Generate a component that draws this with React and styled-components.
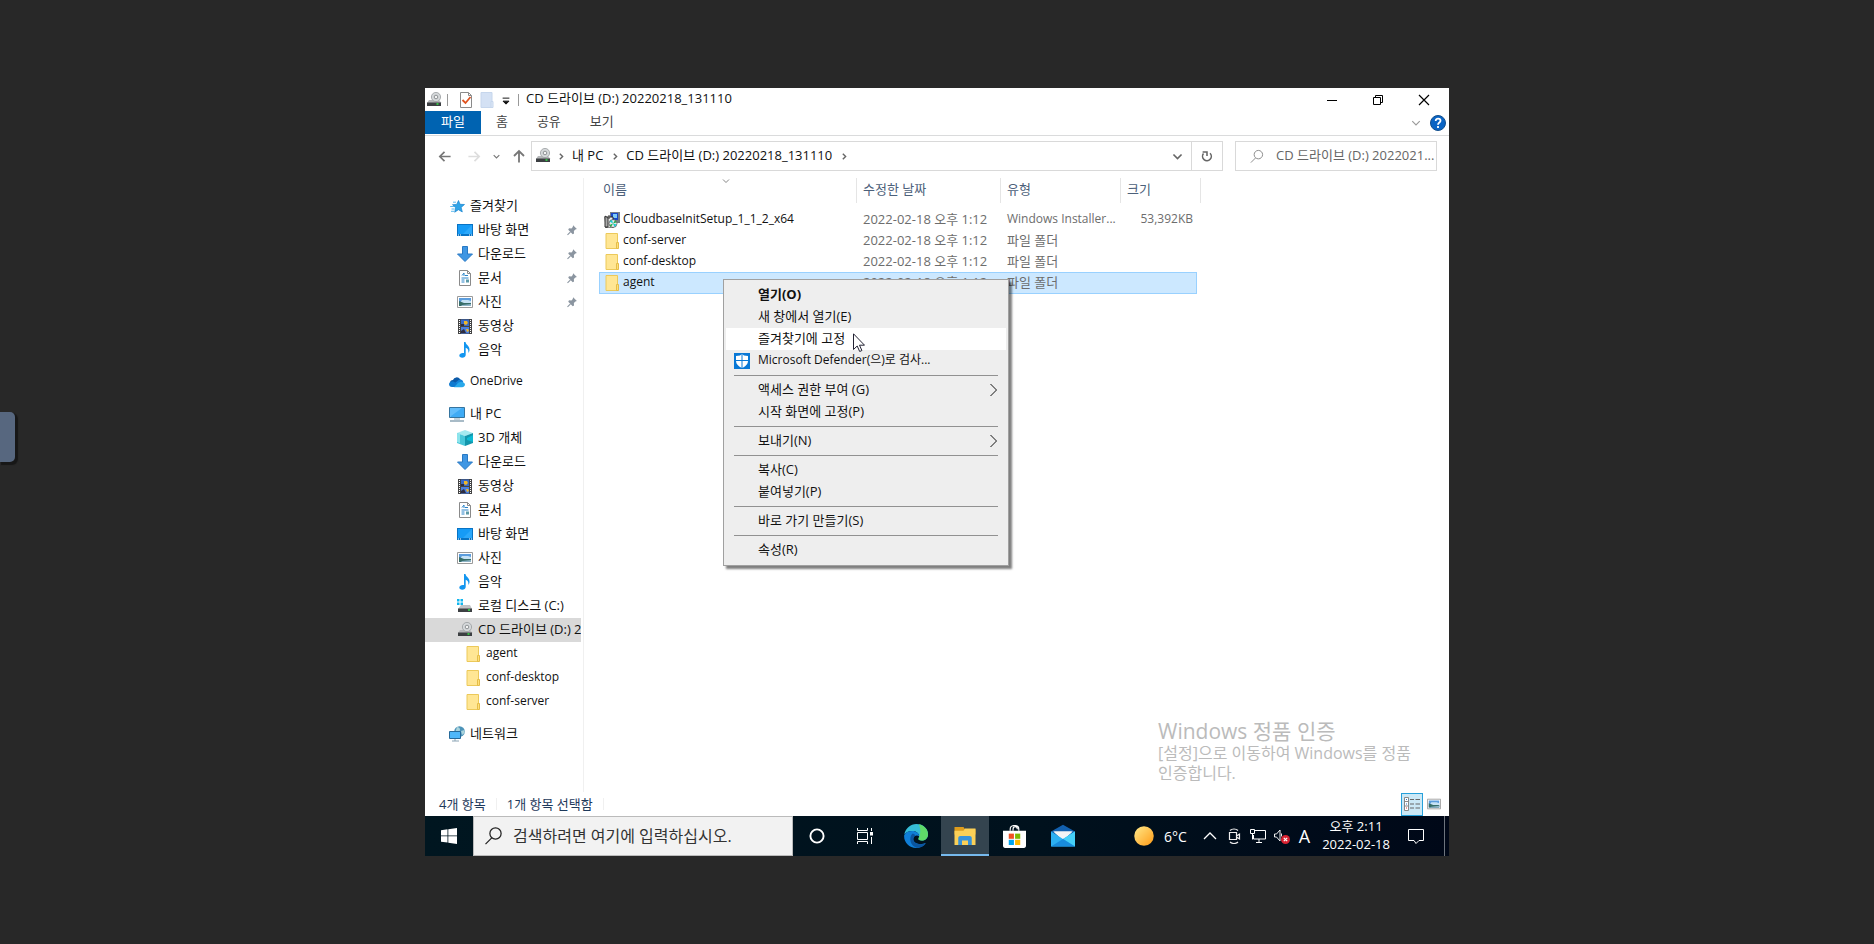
// LIBRARY
import React from "react";

// STYLE
import styled, { createGlobalStyle, css } from "styled-components";

const pinned = [
  { id: "desktop", name: "바탕 화면", icon: "desktop" },
  { id: "download", name: "다운로드", icon: "download" },
  { id: "document", name: "문서", icon: "document" },
  { id: "picture", name: "사진", icon: "picture" },
];

const sideList = [
  { name: "즐겨찾기", icon: "star", level: 0 },
  ...pinned.map((item) => ({ ...item, level: 1, pin: true })),
  { name: "동영상", icon: "video", level: 1 },
  { name: "음악", icon: "music", level: 1 },
  { name: "OneDrive", icon: "cloud", level: 0, gap: true, latin: true },
  { name: "내 PC", icon: "pc", level: 0, gap: true },
  { name: "3D 개체", icon: "cube", level: 1 },
  { name: "다운로드", icon: "download", level: 1 },
  { name: "동영상", icon: "video", level: 1 },
  { name: "문서", icon: "document", level: 1 },
  { name: "바탕 화면", icon: "desktop", level: 1 },
  { name: "사진", icon: "picture", level: 1 },
  { name: "음악", icon: "music", level: 1 },
  { name: "로컬 디스크 (C:)", icon: "disk", level: 1 },
  { name: "CD 드라이브 (D:) 20220218_131110", icon: "drive", level: 1, active: true },
  { name: "agent", icon: "folder", level: 2, latin: true },
  { name: "conf-desktop", icon: "folder", level: 2, latin: true },
  { name: "conf-server", icon: "folder", level: 2, latin: true },
  { name: "네트워크", icon: "network", level: 0, gap: true },
];

const fileList = [
  { name: "CloudbaseInitSetup_1_1_2_x64", icon: "installer", type: "Windows Installer...", size: "53,392KB", latin: true },
  { name: "conf-server", icon: "folder", type: "파일 폴더" },
  { name: "conf-desktop", icon: "folder", type: "파일 폴더" },
  { name: "agent", icon: "folder", type: "파일 폴더", selected: true },
];

const menuList = [
  [
    { name: "열기(O)", bold: true },
    { name: "새 창에서 열기(E)" },
    { name: "즐겨찾기에 고정", hover: true },
    { name: "Microsoft Defender(으)로 검사...", icon: "defender", latin: true },
  ],
  [{ name: "액세스 권한 부여 (G)", arrow: true }, { name: "시작 화면에 고정(P)" }],
  [{ name: "보내기(N)", arrow: true }],
  [{ name: "복사(C)" }, { name: "붙여넣기(P)" }],
  [{ name: "바로 가기 만들기(S)" }],
  [{ name: "속성(R)" }],
];

// ICONS (16 x 16 grid)
const icons = {
  star: (
    <>
      <path d="M9.500 2.500l1.500 3.800 4.500.2-3.400 2.900 1.200 4.500-3.900-2.200-3.700 2.500.9-4.500-3.100-3 4.200-.3z" fill="#2fa4e8" stroke="#1583cf" strokeWidth=".7" />
      <path d="M4 4.200h3M1.200 8.500h4M2.500 11h3M2 13.300h3" stroke="#59b9ee" />
    </>
  ),
  desktop: (
    <>
      <path d="M0 2h16v12H0z" fill="#0873c4" />
      <path d="M1 3h14v9H1z" fill="#169bf6" />
      <path d="M6 12L15 3v9z" fill="#2ba8fb" />
      <path d="M1 13h1M3 13h1M12 13h1M14 13h1" stroke="#fff" />
    </>
  ),
  download: <path d="M5.500.500h5V8h5L8 15.500.500 8h5z" fill="#3f96e3" stroke="#2879c4" />,
  document: (
    <>
      <path d="M2.500.500h8l3 3v12h-11z" fill="#fff" stroke="#8a8a8a" />
      <path d="M10.500.500v3h3" fill="none" stroke="#8a8a8a" />
      <path d="M5 5.500L7 3v3M8 5.500h3M4.500 8h7M4.500 10h3M4.500 12h3" fill="none" stroke="#2b84c9" />
      <path d="M9 9.500h3v3H9z" fill="#5c9aa8" />
    </>
  ),
  picture: (
    <>
      <path d="M.5 2.500h15v11H.5z" fill="#fff" stroke="#9a9a9a" />
      <path d="M2 4h12v8H2z" fill="#5c9ddd" />
      <path d="M5 6h6l3 1v2H3z" fill="#c6e2f5" />
      <path d="M2 7l5 2 7 0v3H2z" fill="#376d68" />
      <path d="M5 11l9-1v2H4z" fill="#8eb4c7" />
    </>
  ),
  video: (
    <>
      <path d="M1 1h14v15H1z" fill="#444" />
      <path d="M4 1.500h8V8H4z" fill="#3769c8" />
      <path d="M4 9h8v6.500H4z" fill="#4a7fe0" />
      <path d="M7 3h3l1 2-2 2-2-1zM9 11h2l1 2-2 1z" fill="#efb72c" />
      <path d="M4 6h3v2H4zM4 13l3-2 2 4H4z" fill="#2d2d43" />
      <path d="M2.500 2v13M13.500 2v13" stroke="#fff" strokeDasharray="1 1" />
    </>
  ),
  music: (
    <path
      d="M7 0h1.500c.3 3.200 4.500 3.500 4 8.500-.1 1-.6 1.800-1.200 2.500.5-3-.5-4.500-2.600-5.200V13c0 1.600-1.600 2.800-3.500 2.800-1.700 0-2.900-.9-2.900-2.200 0-1.600 1.700-2.700 3.400-2.700.5 0 .9.1 1.300.2z"
      fill="#1296f0"
    />
  ),
  cloud: (
    <>
      <path d="M4 6a4 4 0 0 1 7-1l3 4-9 3-4-3c0-2 1-3 3-3z" fill="#0c5aa8" />
      <path d="M9 6.500c2-2 5-.7 5.200 1.600L11 12 6 9z" fill="#1583d8" />
      <path d="M3 13c-3.500 0-4-4.500-1-5.300C4 7 5 7.500 7 9l4 4z" fill="#0f7ad0" />
      <path d="M5 13.300L9 9c2-1.600 3.500-1 5-.8 3 .8 2.500 5-1 5.100z" fill="#28a8ea" />
    </>
  ),
  pc: (
    <>
      <path d="M.5 1.500h15v10H.5z" fill="#62bdfb" stroke="#35749f" />
      <path d="M2 10L13 2h2v9H2z" fill="#3fabf5" />
      <path d="M5 13h6" stroke="#88a8bd" />
      <path d="M1 15h14" stroke="#8ba4b5" strokeWidth="1.500" />
    </>
  ),
  cube: (
    <>
      <path d="M0 3l8-3 8 3-8 3z" fill="#a5eaf0" />
      <path d="M0 3l8 3v10l-8-3z" fill="#48c6d8" />
      <path d="M8 6l8-3v10l-8 3z" fill="#1296ac" />
      <path d="M10 8l6-3v7l-6-2z" fill="#0dbad3" />
      <path d="M0 3l3 1v9l-3-1z" fill="#8ce4ec" />
    </>
  ),
  disk: (
    <>
      <path d="M0 1h2.500v2.500H0zM3.500 1H6v2.500H3.500zM0 4.500h2.500V7H0zM3.500 4.500H6V7H3.500z" fill="#10b6ee" />
      <path d="M4 7h9l2 4H1z" fill="#bfc1c4" />
      <path d="M1 10.500h14V14H1z" fill="#3c3f42" />
      <path d="M11 12h2" stroke="#35e848" strokeWidth="1.500" />
    </>
  ),
  drive: (
    <>
      <path d="M3 8h10l2.500 3H1z" fill="#b5b7b9" />
      <circle cx="10" cy="5" r="4.600" fill="#d5d8da" stroke="#999da0" strokeWidth=".8" />
      <circle cx="10" cy="5" r="1.800" fill="#f4f4f4" stroke="#85898c" strokeWidth=".9" />
      <path d="M1 10.500h14V14H1z" fill="#3c3f42" />
      <path d="M10.500 12h2" stroke="#35e848" strokeWidth="1.500" />
    </>
  ),
  folder: (
    <>
      <path d="M2 .5h11.500v15H2z" fill="#ffe694" stroke="#ecc95a" />
      <path d="M12.500 9.500h2v6h-2z" fill="#ffe07a" stroke="#e5bd49" />
    </>
  ),
  network: (
    <>
      <circle cx="10.500" cy="5.500" r="5.300" fill="#4c93b8" />
      <path d="M8 1c3 0 4 3 2 5l-4 1zM12 5l3.500-1v3L13 9z" fill="#a9d3dc" />
      <path d="M.5 5.500h11v7H.5z" fill="#4fb8fa" stroke="#266a9a" />
      <path d="M3 15h7M6 13v2" stroke="#8ba4b5" />
    </>
  ),
  installer: (
    <>
      <path d="M6 0h10v11H6z" fill="#777e86" />
      <path d="M7 1h7v7H7z" fill="#1746c8" />
      <path d="M9 2h4v4H9z" fill="#7ccaf8" />
      <path d="M1 5h8v11H2z" fill="#efefef" stroke="#222" />
      <path d="M1 4l3 2v9H1zM5 3v4" fill="#aaa" stroke="#333" />
      <circle cx="9" cy="11.500" r="4" fill="#e8e8e8" stroke="#333" strokeWidth=".6" />
      <path d="M9 11.500L5.500 9.500 8 7.800zM9 11.500l3.700 1L10.500 15z" fill="#17cbd2" />
      <path d="M9 11.500l2-3.300 1.800 2zM9 11.500l-2 3.400-1.500-2z" fill="#24ab43" />
    </>
  ),
  defender: (
    <>
      <path d="M0 0h16v16H0z" fill="#0878d6" />
      <path d="M8 1l2 1.500 4 .5v5c0 3-2.500 5.500-6 7-3.500-1.500-6-4-6-7V3l4-.5z" fill="#fff" />
      <path d="M8 1v14M2 7.500h12" stroke="#0878d6" />
    </>
  ),
  check: (
    <>
      <path d="M2.500.500h8l3 3v12h-11z" fill="#fff" stroke="#8a8a8a" />
      <path d="M10.500.500v3h3" fill="none" stroke="#8a8a8a" />
      <path d="M4.500 8l3 3 5-6" fill="none" stroke="#e0531f" strokeWidth="1.800" />
    </>
  ),
  blueFolder: (
    <>
      <path d="M2 .5h11v15H2z" fill="#d4e1f4" stroke="#c6d6ec" />
      <path d="M12 9.500h2v6h-2z" fill="#dfe9f7" stroke="#c6d6ec" />
    </>
  ),
  pin: (
    <>
      <path d="M9.500 1.500l5 5-2 .7-2 2 .2 3.300-1.700 1L3 7.500l1-1.700 3.300.2 1.700-2z" fill="#8b95a0" />
      <path d="M6 10.500L2 14.500" stroke="#8b95a0" strokeWidth="1.400" />
    </>
  ),
  back: <path d="M14.500 8H3M8 3L3 8l5 5" fill="none" stroke="currentColor" strokeWidth="1.800" />,
  forward: <path d="M1.500 8H13M8 3l5 5-5 5" fill="none" stroke="currentColor" strokeWidth="1.800" />,
  up: <path d="M8 14.500V3M3 8l5-5 5 5" fill="none" stroke="currentColor" strokeWidth="1.800" />,
  down: <path d="M3 5.500l5 5 5-5" fill="none" stroke="currentColor" strokeWidth="2" />,
  thinDown: <path d="M2 5l6 6 6-6" fill="none" stroke="currentColor" strokeWidth="1.800" />,
  right: <path d="M5 3l5 5-5 5" fill="none" stroke="currentColor" strokeWidth="2.500" />,
  submenu: <path d="M4.500 2L10.500 8l-6 6" fill="none" stroke="currentColor" />,
  refresh: (
    <>
      <path d="M4 5.200A5 5 0 1 0 11.500 4.800" fill="none" stroke="currentColor" strokeWidth="1.800" />
      <path d="M3 3.500h5V8" fill="none" stroke="currentColor" strokeWidth="1.800" />
    </>
  ),
  search: (
    <>
      <circle cx="10" cy="6" r="4.500" fill="none" stroke="currentColor" />
      <path d="M7 9.500L2 14.500" stroke="currentColor" />
    </>
  ),
  quick: <path d="M3.500 5.500h9M4 9.500h8l-4 4z" fill="#111" stroke="#111" strokeWidth="1.300" />,
  min: <path d="M3 8.500h10" stroke="#000" />,
  restore: <path d="M3.500 5.500h7v7h-7zM5.500 5.500v-2h7v7h-2" fill="none" stroke="#000" />,
  close: <path d="M3 3l10 10M13 3L3 13" stroke="#000" strokeWidth="1.200" />,
  help: (
    <>
      <circle cx="8" cy="8" r="7.500" fill="#0a64c4" stroke="#124e8c" />
      <path d="M5.700 6c0-3.300 4.800-3 4.800-.2C10.500 7.500 8 7.500 8 9.700M8 11v2" fill="none" stroke="#fff" strokeWidth="1.800" />
    </>
  ),
  details: (
    <>
      <path d="M.5 1.500h4v13h-4zM.5 5.500h4M.5 10h4" fill="#fff" stroke="#888" />
      <path d="M2 3.500h1M2 8h1" stroke="#357ac4" />
      <path d="M2 12h1" stroke="#d33" />
      <path d="M6 3.500h4M11.500 3.500H16M6 8h4M11.500 8H16M6 12h4M11.500 12H16" stroke="#666" />
    </>
  ),
  start: <path d="M0 2.200l6.500-.9v6.200H0zM7.300 1.200L16 0v7.500H7.300zM0 8.300h6.500v6.200L0 13.700zM7.300 8.300H16V16l-8.700-1.300z" fill="#fff" />,
  cortana: <circle cx="8" cy="8" r="6.600" fill="none" stroke="#fff" strokeWidth="1.900" />,
  taskView: (
    <>
      <path d="M.5 0v2.500h10V0M.5 16v-2.500h10V16M.5 4.500h10v7H.5zM14.500 0v3M14.500 9v7" fill="none" stroke="#fff" />
      <path d="M13 4h3v3.500h-3z" fill="#fff" />
    </>
  ),
  edge: (
    <>
      <path d="M.2 7C1 2.800 4.300 0 8.200 0 13 0 16 3.300 16 6.800c0 2.700-2 4.200-4.200 4.200-1.800 0-2.600-.7-2-1.700C11 7 8.500 4.600 5.500 4.600 3 4.600 1 5.600.2 7z" fill="#35bdd8" />
      <path d="M10 .2c3.600.8 6 3.500 6 6.600 0 2.700-2 4.200-4.200 4.200-1.800 0-2.600-.7-2-1.700 1.700-3.400 1-6.400.2-9.100z" fill="#5fdb68" />
      <path d="M.1 7.500C.8 5.600 3 4.600 5.500 4.600c2.600 0 4.700 1.700 4.600 3.600-1.200-1-3.600-.6-3.900 1.600-.4 3 4 4.700 8.300 2.900C13 15 10.500 16 8 16 3.400 16-.3 12.200.1 7.500z" fill="#0f7fd8" />
      <path d="M5.500 6.500c-2.600 3-1.200 8 3 9.400 2.500.1 4.700-1.100 6.100-3.100-4.200 1.600-8.600 0-8.400-3 .1-1.200.7-1.900 1.500-2.200-.6-.8-1.300-1.200-2.200-1.100z" fill="#0b559f" />
    </>
  ),
  explorer: (
    <>
      <path d="M1 2h6l1 1.500h7V7H1z" fill="#dd9c1d" />
      <path d="M1 4.500h6L8 3h7v11H1z" fill="#fbd057" />
      <path d="M3.500 14V9.500c0-1 .5-1.500 1.500-1.500h6c1 0 1.500.5 1.500 1.500V14H10v-3H6v3z" fill="#3793db" />
    </>
  ),
  store: (
    <>
      <path d="M5 4V3c0-3.500 6-3.500 6 0v1M7 4V3c0-2.500 3-2.500 3 0" fill="none" stroke="#fff" strokeWidth=".8" />
      <path d="M0 4h16v10.500c0 .8-.5 1.500-1.500 1.500h-13C.5 16 0 15.300 0 14.500z" fill="#fff" />
      <path d="M4 6h3.600v3.600H4z" fill="#f25022" />
      <path d="M8.400 6H12v3.600H8.400z" fill="#7fba00" />
      <path d="M4 10.300h3.600v3.600H4z" fill="#00a4ef" />
      <path d="M8.400 10.300H12v3.600H8.400z" fill="#ffb900" />
    </>
  ),
  mail: (
    <>
      <path d="M0 5l8-4.500L16 5v4H0z" fill="#1260ae" />
      <path d="M1.500 5h13L8 11z" fill="#f3f5f6" />
      <path d="M0 5l8 5 8-5v10H0z" fill="#2cb0f2" />
      <path d="M2 5h12L8 9.500z" fill="#f3f5f6" />
      <path d="M16 5L8 10l8 5z" fill="#45d0f8" />
      <path d="M0 15L8 10l8 5z" fill="#188bdc" />
    </>
  ),
  sun: (
    <>
      <defs>
        <linearGradient id="sun" x1="0" y1="0" x2="1" y2="1">
          <stop offset="0" stopColor="#ffe98a" />
          <stop offset="1" stopColor="#ff9b16" />
        </linearGradient>
      </defs>
      <circle cx="8" cy="8" r="7.800" fill="url(#sun)" />
    </>
  ),
  trayUp: <path d="M2 11l6-6 6 6" fill="none" stroke="#fff" strokeWidth="1.300" />,
  camera: <path d="M3.500 4.500h7v7h-7zM10.500 8l3-2v5l-3-2M4 2.500C6 .5 10 .5 12 2.500M4 14c2 2 6 2 8 0" fill="none" stroke="#eee" strokeWidth="1.200" />,
  lan: <path d="M5 2.500h10.500v8.500H3.500V7M9 11v3.500M6 14.500h6M.5 1.500h4v4h-4zM2.500 5.500v6" fill="none" stroke="#fff" />,
  sound: (
    <>
      <path d="M.5 6h2l3.500-4v11l-3.500-4h-2zM7.500 5.500v3" fill="none" stroke="#eee" />
      <circle cx="11.500" cy="11.500" r="4.500" fill="#d92231" />
      <path d="M9.800 9.800l3.400 3.400M13.200 9.800l-3.400 3.400" stroke="#fff" strokeWidth="1.200" />
    </>
  ),
  notice: <path d="M.5 1.500h15v11H11L8 15.500l-2-3H.5z" fill="none" stroke="#fff" />,
};

const Icon = ({ name, size = 16 }) => (
  <Svg viewBox="0 0 16 16" $size={size} aria-hidden="true">
    {icons[name]}
  </Svg>
);

const TitleBar = () => (
  <TitleWrap>
    <Icon name="drive" />
    <Bar $left={5} $right={10} />
    <Icon name="check" />
    <QuickGap />
    <Icon name="blueFolder" />
    <QuickGap />
    <Icon name="quick" size={12} />
    <Bar $left={6} $right={7} />
    <WindowTitle>CD 드라이브 (D:) 20220218_131110</WindowTitle>
    <WindowButton aria-label="최소화"><Icon name="min" /></WindowButton>
    <WindowButton aria-label="이전 크기로"><Icon name="restore" /></WindowButton>
    <WindowButton aria-label="닫기"><Icon name="close" /></WindowButton>
  </TitleWrap>
);

const Ribbon = () => (
  <RibbonWrap>
    <Tab $active>파일</Tab>
    <Tab>홈</Tab>
    <Tab>공유</Tab>
    <Tab>보기</Tab>
    <RibbonRight>
      <PlainButton $color="#999" aria-label="리본 확장"><Icon name="thinDown" size={10} /></PlainButton>
      <PlainButton aria-label="도움말"><Icon name="help" /></PlainButton>
    </RibbonRight>
  </RibbonWrap>
);

const AddressBar = () => (
  <AddressWrap>
    <NavButtons>
      <PlainButton $color="#777" aria-label="뒤로"><Icon name="back" size={15} /></PlainButton>
      <PlainButton $color="#ddd" aria-label="앞으로"><Icon name="forward" size={15} /></PlainButton>
      <PlainButton $color="#777" aria-label="최근 위치"><Icon name="down" size={9} /></PlainButton>
      <PlainButton $color="#777" aria-label="위로"><Icon name="up" size={16} /></PlainButton>
    </NavButtons>
    <AddressBox>
      <Icon name="drive" />
      <Crumb><Icon name="right" size={9} /></Crumb>
      <CrumbButton>내 PC</CrumbButton>
      <Crumb><Icon name="right" size={9} /></Crumb>
      <CrumbButton>CD 드라이브 (D:) 20220218_131110</CrumbButton>
      <Crumb><Icon name="right" size={9} /></Crumb>
      <AddressEnd>
        <BoxButton $width={28} aria-label="이전 위치"><Icon name="down" size={13} /></BoxButton>
        <BoxButton $width={31} $line aria-label="새로 고침"><Icon name="refresh" size={14} /></BoxButton>
      </AddressEnd>
    </AddressBox>
    <SearchBox>
      <Icon name="search" size={15} />
      <SearchInput aria-label="검색" placeholder="CD 드라이브 (D:) 2022021..." />
    </SearchBox>
  </AddressWrap>
);

const Sidebar = () => (
  <SideWrap>
    {sideList.map((item, idx) => (
      <SideItem key={idx} $level={item.level} $gap={item.gap} $active={item.active} $latin={item.latin}>
        <Icon name={item.icon} />
        <SideName>{item.name}</SideName>
        {item.pin && <Icon name="pin" size={12} />}
      </SideItem>
    ))}
  </SideWrap>
);

const FileTable = () => (
  <Table>
    <thead>
      <HeadRow>
        <HeadCell>
          이름
          <SortMark><Icon name="thinDown" size={8} /></SortMark>
        </HeadCell>
        <HeadCell>수정한 날짜</HeadCell>
        <HeadCell>유형</HeadCell>
        <HeadCell>크기</HeadCell>
      </HeadRow>
    </thead>
    <TableBody>
      {fileList.map((file) => (
        <FileRow key={file.name} $selected={file.selected}>
          <NameCell $latin>
            <Icon name={file.icon} />
            <span>{file.name}</span>
          </NameCell>
          <FileCell>2022-02-18 오후 1:12</FileCell>
          <FileCell $latin={file.latin}>{file.type}</FileCell>
          <FileCell $latin $right>{file.size}</FileCell>
        </FileRow>
      ))}
    </TableBody>
  </Table>
);

const ContextMenu = () => (
  <MenuWrap role="menu">
    {menuList.map((group, idx) => (
      <MenuGroup key={idx}>
        {group.map((item) => (
          <MenuItem key={item.name} role="menuitem" $hover={item.hover} $bold={item.bold} $latin={item.latin}>
            <MenuIcon>{item.icon && <Icon name={item.icon} />}</MenuIcon>
            <MenuName>{item.name}</MenuName>
            {item.arrow && <Icon name="submenu" />}
          </MenuItem>
        ))}
      </MenuGroup>
    ))}
  </MenuWrap>
);

const Taskbar = () => (
  <TaskWrap>
    <TaskButton aria-label="시작"><Icon name="start" /></TaskButton>
    <TaskSearch>
      <Icon name="search" size={20} />
      <TaskInput aria-label="작업 표시줄 검색" placeholder="검색하려면 여기에 입력하십시오." />
    </TaskSearch>
    <TaskButton aria-label="Cortana"><Icon name="cortana" /></TaskButton>
    <TaskButton aria-label="작업 보기"><Icon name="taskView" /></TaskButton>
    <TaskApps>
      <TaskButton aria-label="Edge"><Icon name="edge" size={24} /></TaskButton>
      <TaskButton $active aria-label="파일 탐색기"><Icon name="explorer" size={24} /></TaskButton>
      <TaskButton aria-label="Store"><Icon name="store" size={23} /></TaskButton>
      <TaskButton aria-label="메일"><Icon name="mail" size={24} /></TaskButton>
    </TaskApps>
    <Tray>
      <Weather>
        <Icon name="sun" size={20} />
        6°C
      </Weather>
      <TrayIcons>
        <Icon name="trayUp" />
        <Icon name="camera" />
        <Icon name="lan" />
        <Icon name="sound" />
      </TrayIcons>
      <InputMode>A</InputMode>
      <Clock>
        <span>오후 2:11</span>
        <span>2022-02-18</span>
      </Clock>
      <NoticeButton aria-label="알림"><Icon name="notice" /></NoticeButton>
    </Tray>
  </TaskWrap>
);

const App = () => {
  return (
    <Stage>
      <GlobalStyle />
      <PanelHandle aria-label="제어판 열기" />
      <Screen>
        <Explorer>
          <TitleBar />
          <Ribbon />
          <AddressBar />
          <Content>
            <Sidebar />
            <FileTable />
          </Content>
          <StatusBar>
            <StatusText>4개 항목</StatusText>
            <StatusText>1개 항목 선택함</StatusText>
            <ViewButtons>
              <ViewButton $active aria-label="자세히"><Icon name="details" /></ViewButton>
              <ViewButton aria-label="큰 아이콘"><Icon name="picture" size={14} /></ViewButton>
            </ViewButtons>
          </StatusBar>
        </Explorer>
        <Taskbar />
        <Watermark>
          <h2>Windows 정품 인증</h2>
          <p>[설정]으로 이동하여 Windows를 정품 인증합니다.</p>
        </Watermark>
        <ContextMenu />
        <Pointer viewBox="0 0 12 19" aria-hidden="true">
          <path d="M.5.8v15.700l3.700-3.500 2.500 5.500 2.200-1-2.400-5.300h5z" fill="#fff" stroke="#223" />
        </Pointer>
      </Screen>
    </Stage>
  );
};

const GlobalStyle = createGlobalStyle`
  * {
    box-sizing: border-box;
  }
  body {
    margin: 0;
    background: #282828;
    font-family: "Open Sans", "Noto Sans CJK KR", sans-serif;
    font-size: 13px;
    color: #111;
  }
  button, input {
    font: inherit;
    color: inherit;
    border: 0;
    padding: 0;
    background: none;
  }
`;

const Svg = styled.svg`
  display: block;
  flex: none;
  width: ${(props) => props.$size}px;
  height: ${(props) => props.$size}px;
`;

const Stage = styled.div`
  min-height: 100vh;
  padding: 88px 24px;
  display: flex;
  justify-content: center;
`;
const PanelHandle = styled.button`
  position: fixed;
  left: 0;
  top: 412px;
  width: 15px;
  height: 50px;
  border-radius: 0 5px 5px 0;
  background: #57677f;
  box-shadow: 2px 2px 1px 1px #171717;
`;
const Screen = styled.main`
  position: relative;
  flex: 1;
  max-width: 1024px;
  display: flex;
  flex-direction: column;
  background: #fff;
`;
const Explorer = styled.section`
  flex: 1;
  display: flex;
  flex-direction: column;
`;

const TitleWrap = styled.header`
  height: 23px;
  padding: 0 2px 0 1px;
  display: flex;
  align-items: center;
`;
const Bar = styled.span`
  width: 1px;
  height: 12px;
  background: #999;
  margin: 0 ${(props) => props.$right}px 0 ${(props) => props.$left}px;
`;
const QuickGap = styled.span`
  width: 5px;
`;
const WindowTitle = styled.h1`
  flex: 1;
  margin: 0;
  padding-bottom: 3px;
  font-size: 13px;
  font-weight: 400;
  line-height: 18px;
`;
const WindowButton = styled.button`
  width: 46px;
  height: 20px;
  display: flex;
  align-items: center;
  justify-content: center;
`;

const RibbonWrap = styled.nav`
  height: 25px;
  padding-bottom: 1px;
  display: flex;
  gap: 1px;
  border-bottom: 1px solid #dadbdc;
`;
const Tab = styled.button`
  padding: 0 ${(props) => (props.$active ? 16 : 14)}px 3px;
  line-height: 20px;
  color: ${(props) => (props.$active ? "#fff" : "#444")};
  background: ${(props) => (props.$active ? "#0063b1" : "transparent")};
`;
const RibbonRight = styled.div`
  margin-left: auto;
  padding-right: 3px;
  display: flex;
  align-items: center;
  gap: 9px;
`;
const PlainButton = styled.button`
  color: ${(props) => props.$color || "inherit"};
`;

const AddressWrap = styled.div`
  padding: 5px 12px 0 0;
  display: flex;
`;
const NavButtons = styled.div`
  width: 106px;
  padding-left: 12px;
  display: flex;
  align-items: center;
  gap: 10px;
  ${PlainButton}:first-child {
    margin-right: 5px;
  }
`;
const AddressBox = styled.div`
  flex: 1;
  height: 30px;
  padding-left: 3px;
  display: flex;
  align-items: center;
  border: 1px solid #d9d9d9;
`;
const Crumb = styled.span`
  padding: 0 4px 0 6px;
  color: #666;
`;
const CrumbButton = styled.button`
  padding: 0 2px 3px;
  line-height: 20px;
`;
const AddressEnd = styled.div`
  margin-left: auto;
  align-self: stretch;
  display: flex;
  color: #666;
`;
const BoxButton = styled.button`
  width: ${(props) => props.$width}px;
  display: flex;
  align-items: center;
  justify-content: center;
  border-left: ${(props) => (props.$line ? "1px solid #d9d9d9" : 0)};
`;
const SearchBox = styled.label`
  width: 202px;
  margin-left: 12px;
  padding-left: 13px;
  display: flex;
  align-items: center;
  gap: 12px;
  border: 1px solid #d9d9d9;
  color: #888;
`;
const SearchInput = styled.input`
  flex: 1;
  min-width: 0;
  padding-bottom: 2px;
  outline: 0;
  &::placeholder {
    color: #666;
  }
`;

const Content = styled.div`
  flex: 1;
  margin-top: 7px;
  display: flex;
  align-items: stretch;
`;
const SideWrap = styled.nav`
  width: 159px;
  flex: none;
  padding: 16px 2px 0 0;
  border-right: 1px solid #f0f0f0;
`;
const SideItem = styled.button`
  width: 100%;
  height: 24px;
  margin-top: ${(props) => (props.$gap ? 8 : 0)}px;
  padding: 0 ${(props) => (props.$active ? 0 : 3)}px 0 ${(props) => 24 + props.$level * 8}px;
  display: flex;
  align-items: center;
  gap: 5px;
  font-size: ${(props) => (props.$latin ? 12 : 13)}px;
  text-align: left;
  background: ${(props) => (props.$active ? "#d9d9d9" : "transparent")};
`;
const SideName = styled.span`
  flex: 1;
  padding-bottom: 3px;
  line-height: 20px;
  overflow: hidden;
  white-space: nowrap;
`;

const Table = styled.table`
  margin-left: 15px;
  display: block;
  border-collapse: collapse;
  thead {
    display: block;
  }
`;
const rowGrid = css`
  display: grid;
  grid-template-columns: 258px 144px 120px 80px;
`;
const HeadRow = styled.tr`
  ${rowGrid}
`;
const HeadCell = styled.th`
  position: relative;
  height: 25px;
  padding: 0 6px 3px;
  line-height: 22px;
  font-weight: 400;
  text-align: left;
  color: #4c607a;
  border-right: 1px solid #e5e5e5;
  &:first-child {
    padding-left: 4px;
  }
`;
const SortMark = styled.span`
  position: absolute;
  top: -1px;
  left: 48%;
  color: #777;
`;
const TableBody = styled.tbody`
  display: block;
  padding: 6px 4px 0 0;
`;
const FileRow = styled.tr`
  ${rowGrid}
  grid-template-columns: 257px 144px 120px 1fr;
  height: 22px;
  margin-bottom: -1px;
  border: 1px solid ${(props) => (props.$selected ? "#99d1ff" : "transparent")};
  background: ${(props) => (props.$selected ? "#cce8ff" : "transparent")};
`;
const FileCell = styled.td`
  height: 20px;
  padding: 0 ${(props) => (props.$right ? 3 : 6)}px;
  font-size: ${(props) => (props.$latin ? 12 : 13)}px;
  line-height: 18px;
  white-space: nowrap;
  color: #6d6d6d;
  text-align: ${(props) => (props.$right ? "right" : "left")};
`;
const NameCell = styled(FileCell)`
  padding-left: 4px;
  display: flex;
  align-items: center;
  gap: 3px;
  color: #111;
  span {
    padding-bottom: 2px;
  }
`;

const StatusBar = styled.footer`
  height: 24px;
  padding: 0 7px 0 14px;
  display: flex;
  align-items: center;
`;
const StatusText = styled.span`
  padding-right: 10px;
  margin-right: 10px;
  line-height: 12px;
  color: #1e395b;
  border-right: 1px solid #f0f0f0;
`;
const ViewButtons = styled.div`
  margin-left: auto;
  display: flex;
  gap: 3px;
`;
const ViewButton = styled.button`
  height: 23px;
  padding: 0 ${(props) => (props.$active ? 2 : 1)}px;
  border: ${(props) => (props.$active ? "1px solid #26a0da" : 0)};
  background: ${(props) => (props.$active ? "#cbe8f6" : "transparent")};
`;

const Watermark = styled.aside`
  position: absolute;
  right: 28px;
  bottom: 73px;
  width: 263px;
  color: #bbb;
  word-break: keep-all;
  h2 {
    margin: 0;
    font-size: 21px;
    font-weight: 400;
    line-height: 24px;
  }
  p {
    margin: 0;
    font-size: 16px;
    line-height: 20px;
  }
`;

const MenuWrap = styled.div`
  position: absolute;
  left: 298px;
  top: 191px;
  width: 286px;
  padding: 4px 2px;
  border: 1px solid #a0a0a0;
  background: #eee;
  box-shadow: 3px 3px 2px rgba(0, 0, 0, 0.5);
`;
const MenuGroup = styled.div`
  & + &::before {
    content: "";
    display: block;
    height: 1px;
    margin: 3px 8px;
    background: #919191;
  }
`;
const MenuItem = styled.button`
  width: 100%;
  height: 22px;
  padding: 0 4px 0 8px;
  display: flex;
  align-items: center;
  font-size: ${(props) => (props.$latin ? 12 : 13)}px;
  font-weight: ${(props) => (props.$bold ? 700 : 400)};
  background: ${(props) => (props.$hover ? "#fff" : "transparent")};
`;
const MenuIcon = styled.span`
  width: 24px;
`;
const MenuName = styled.span`
  flex: 1;
  padding-bottom: 3px;
  line-height: 18px;
  text-align: left;
`;
const Pointer = styled.svg`
  position: absolute;
  left: 428px;
  top: 245px;
  width: 12px;
  height: 19px;
`;

const TaskWrap = styled.footer`
  height: 40px;
  display: flex;
  background: linear-gradient(90deg, #001620, #00111d 60%, #000818);
  color: #fff;
`;
const TaskButton = styled.button`
  width: 48px;
  display: flex;
  align-items: center;
  justify-content: center;
  background: ${(props) => (props.$active ? "#34444f" : "transparent")};
  box-shadow: ${(props) => (props.$active ? "inset 0 -2px #76b9ed" : "none")};
`;
const TaskSearch = styled.label`
  width: 320px;
  padding-left: 9px;
  display: flex;
  align-items: center;
  gap: 10px;
  background: #f2f2f2;
  border: 1px solid #bbb;
  color: #222;
`;
const TaskInput = styled.input`
  flex: 1;
  min-width: 0;
  font-size: 16px;
  outline: 0;
  &::placeholder {
    color: #333;
  }
`;
const TaskApps = styled.div`
  margin-left: 3px;
  display: flex;
  gap: 1px;
`;
const Tray = styled.div`
  margin-left: auto;
  display: flex;
  align-items: center;
`;
const Weather = styled.div`
  display: flex;
  align-items: center;
  gap: 10px;
  font-size: 14px;
`;
const TrayIcons = styled.div`
  margin-left: 15px;
  display: flex;
  gap: 8px;
`;
const InputMode = styled.span`
  margin-left: 9px;
  font-size: 18px;
`;
const Clock = styled.time`
  margin-left: 12px;
  padding-bottom: 2px;
  display: flex;
  flex-direction: column;
  align-items: center;
  line-height: 18px;
`;
const NoticeButton = styled.button`
  height: 40px;
  margin: 0 4px 0 18px;
  padding-right: 20px;
  border-right: 1px solid #6d747d;
`;

export default App;
